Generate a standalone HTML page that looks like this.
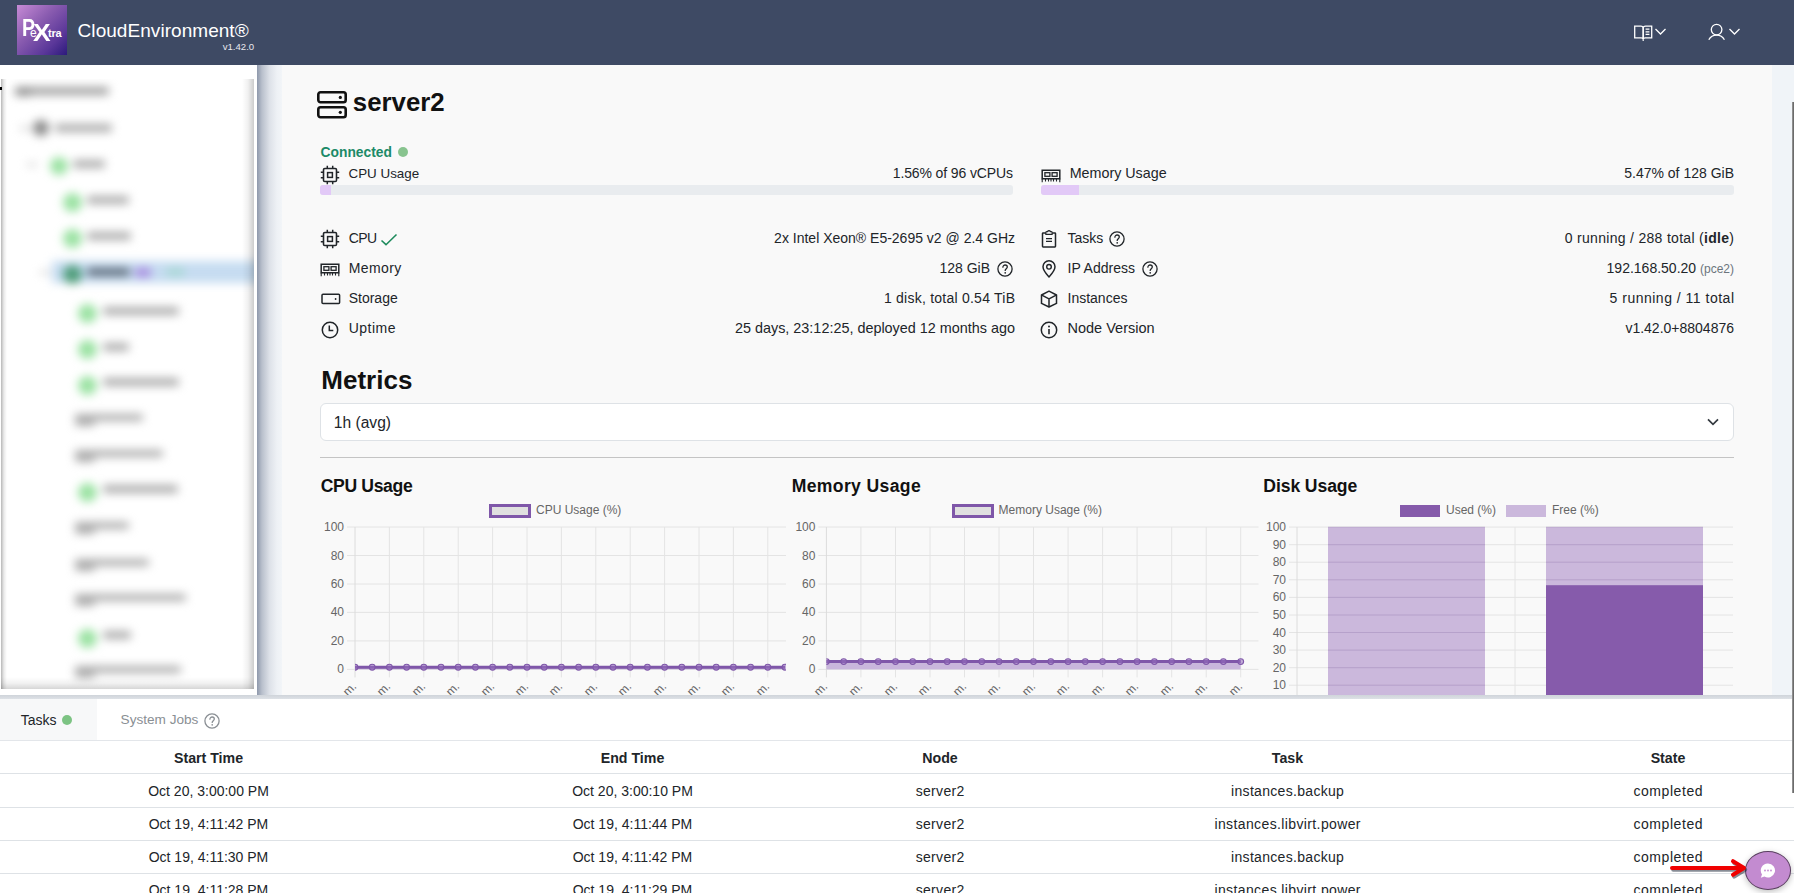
<!DOCTYPE html><html><head><meta charset="utf-8"><style>
html,body{margin:0;padding:0;width:1794px;height:893px;overflow:hidden;background:#f9f9f9;font-family:"Liberation Sans", sans-serif;}
.t{position:absolute;white-space:nowrap;}
.r{position:absolute;display:block;}
</style></head><body>
<div class="r" style="left:0.00px;top:65.00px;width:1794.00px;height:828.00px;background:#f9f9f9;"></div>
<div class="r" style="left:1772.00px;top:65.00px;width:22.00px;height:630.00px;background:#f0f4f8;"></div>
<div class="r" style="left:0.00px;top:0.00px;width:1794.00px;height:65.00px;background:#3e4a64;"></div>
<div class="r" style="left:17.00px;top:5.00px;width:50.00px;height:50.00px;background:linear-gradient(135deg,#c78bd6 0%,#8a5cb0 40%,#5a3799 75%,#2c1a7c 100%);"></div>
<div class="t" style="left:22px;top:17px;font-size:23px;line-height:23px;font-weight:700;color:#fff;transform:scaleX(0.85);transform-origin:0 0">P</div>
<div class="t" style="left:30px;top:26.5px;font-size:12px;line-height:12px;font-weight:400;color:#fff;">e</div>
<div class="t" style="left:32.5px;top:20.5px;font-size:24px;line-height:24px;font-weight:700;color:#fff;transform:scaleX(1.1);transform-origin:0 0;">X</div>
<div class="t" style="left:48px;top:28px;font-size:11px;line-height:11px;font-weight:700;color:#fff;letter-spacing:-0.2px">tra</div>
<div class="t" style="top:20.92px;font-size:19px;line-height:19px;font-weight:400;color:#ffffff;letter-spacing:0.05px;left:77.60px;">CloudEnvironment®</div>
<div class="t" style="top:41.77px;font-size:9.6px;line-height:9.6px;font-weight:400;color:#e8e8ee;right:1539.80px;">v1.42.0</div>
<svg class="r" style="left:1633.00px;top:24.00px;" width="21" height="18" viewBox="0 0 21 18"><path d="M1.7 2.2h6.1c1.3 0 2.4.9 2.4 2V15.2c0-.8-.9-1.4-2-1.4H1.7z" fill="none" stroke="#fff" stroke-width="1.3"/><path d="M18.7 2.2h-6.1c-1.3 0-2.4.9-2.4 2V15.2c0-.8.9-1.4 2-1.4h6.5z" fill="none" stroke="#fff" stroke-width="1.3"/><path d="M12.6 5.2h3.8M12.6 7.8h3.8M12.6 10.4h3.8" stroke="#fff" stroke-width="1.2"/><path d="M10.2 15.2v1.8" stroke="#fff" stroke-width="1.2"/></svg>
<svg class="r" style="left:1654.00px;top:27.00px;" width="13" height="10" viewBox="0 0 13 10"><path d="M1.5 2l5 5 5-5" fill="none" stroke="#fff" stroke-width="1.3"/></svg>
<svg class="r" style="left:1707.00px;top:22.00px;" width="21" height="20" viewBox="0 0 21 20"><circle cx="9.6" cy="7.6" r="5.3" fill="none" stroke="#fff" stroke-width="1.3"/><path d="M1.8 17.8c1.6-3 4.4-4.6 7.8-4.6s6.2 1.6 7.8 4.6" fill="none" stroke="#fff" stroke-width="1.3"/></svg>
<svg class="r" style="left:1728.00px;top:27.00px;" width="13" height="10" viewBox="0 0 13 10"><path d="M1.5 2l5 5 5-5" fill="none" stroke="#fff" stroke-width="1.3"/></svg>
<div class="r" style="left:0.00px;top:65.00px;width:257.00px;height:630.00px;background:#ffffff;"></div>
<div class="r" style="left:257.00px;top:65.00px;width:25.00px;height:630.00px;background:linear-gradient(90deg,#8e98ab 0%,#b9c0cc 20%,#dde1e8 50%,#eef1f5 80%,#f2f5f8 100%);"></div>
<div class="r" style="left:1px;top:79px;width:253px;height:610px;background:#fff;overflow:hidden;">
<div class="r" style="left:0;top:0;width:253px;height:610px;filter:blur(5px);">
<div class="r" style="left:51px;top:182px;width:220px;height:22px;background:#c6dcf1"></div>
<div class="r" style="left:16.0px;top:7.6px;width:92.0px;height:8px;background:#a0a0a0;border-radius:3px"></div>
<div class="r" style="left:14.0px;top:7.5px;width:16.0px;height:9px;background:#909090;border-radius:3px"></div>
<div class="r" style="left:19.0px;top:47.5px;width:10.0px;height:3px;background:#c4c4c4;border-radius:3px"></div>
<div class="r" style="left:32.0px;top:41.0px;width:16.0px;height:16.0px;background:#8a8a8a;border-radius:50%"></div>
<div class="r" style="left:54.0px;top:45.0px;width:57.0px;height:8px;background:#acacac;border-radius:3px"></div>
<div class="r" style="left:26.0px;top:83.5px;width:10.0px;height:3px;background:#c8c8c8;border-radius:3px"></div>
<div class="r" style="left:49.0px;top:78.0px;width:18.0px;height:18.0px;background:#9ae2a2;border-radius:50%"></div>
<div class="r" style="left:72.0px;top:81.0px;width:32.0px;height:8px;background:#acacac;border-radius:3px"></div>
<div class="r" style="left:62.0px;top:113.5px;width:19.0px;height:19.0px;background:#9ae2a2;border-radius:50%"></div>
<div class="r" style="left:86.0px;top:117.0px;width:42.0px;height:8px;background:#acacac;border-radius:3px"></div>
<div class="r" style="left:62.0px;top:149.5px;width:19.0px;height:19.0px;background:#9ae2a2;border-radius:50%"></div>
<div class="r" style="left:86.0px;top:153.0px;width:44.0px;height:8px;background:#acacac;border-radius:3px"></div>
<div class="r" style="left:39.0px;top:191.8px;width:10.0px;height:3px;background:#c8c8c8;border-radius:3px"></div>
<div class="r" style="left:62.0px;top:185.5px;width:19.0px;height:19.0px;background:#4f9d7a;border-radius:50%"></div>
<div class="r" style="left:86.0px;top:189.3px;width:43.0px;height:8px;background:#5e6a78;border-radius:3px"></div>
<div class="r" style="left:134.0px;top:188.8px;width:16.0px;height:9px;background:#a98ae0;border-radius:3px"></div>
<div class="r" style="left:165.0px;top:189.3px;width:19.0px;height:8px;background:#a8d8d4;border-radius:3px"></div>
<div class="r" style="left:77.0px;top:225.3px;width:19.0px;height:19.0px;background:#9ae2a2;border-radius:50%"></div>
<div class="r" style="left:102.0px;top:227.8px;width:75.6px;height:8px;background:#acacac;border-radius:3px"></div>
<div class="r" style="left:77.0px;top:261.0px;width:19.0px;height:19.0px;background:#9ae2a2;border-radius:50%"></div>
<div class="r" style="left:102.0px;top:263.5px;width:26.0px;height:8px;background:#acacac;border-radius:3px"></div>
<div class="r" style="left:77.0px;top:296.5px;width:19.0px;height:19.0px;background:#9ae2a2;border-radius:50%"></div>
<div class="r" style="left:102.0px;top:299.0px;width:75.6px;height:8px;background:#acacac;border-radius:3px"></div>
<div class="r" style="left:74.0px;top:341.0px;width:20.0px;height:6px;background:#acacac;border-radius:3px"></div>
<div class="r" style="left:74.0px;top:335.0px;width:68.0px;height:7px;background:#acacac;border-radius:3px"></div>
<div class="r" style="left:74.0px;top:376.6px;width:20.0px;height:6px;background:#acacac;border-radius:3px"></div>
<div class="r" style="left:74.0px;top:370.6px;width:87.6px;height:7px;background:#acacac;border-radius:3px"></div>
<div class="r" style="left:77.0px;top:403.5px;width:19.0px;height:19.0px;background:#9ae2a2;border-radius:50%"></div>
<div class="r" style="left:102.0px;top:406.0px;width:75.0px;height:8px;background:#acacac;border-radius:3px"></div>
<div class="r" style="left:74.0px;top:448.6px;width:20.0px;height:6px;background:#acacac;border-radius:3px"></div>
<div class="r" style="left:74.0px;top:442.6px;width:54.0px;height:7px;background:#acacac;border-radius:3px"></div>
<div class="r" style="left:74.0px;top:485.5px;width:20.0px;height:6px;background:#acacac;border-radius:3px"></div>
<div class="r" style="left:74.0px;top:479.5px;width:74.0px;height:7px;background:#acacac;border-radius:3px"></div>
<div class="r" style="left:74.0px;top:521.0px;width:20.0px;height:6px;background:#acacac;border-radius:3px"></div>
<div class="r" style="left:74.0px;top:515.0px;width:111.0px;height:7px;background:#acacac;border-radius:3px"></div>
<div class="r" style="left:77.0px;top:549.5px;width:19.0px;height:19.0px;background:#9ae2a2;border-radius:50%"></div>
<div class="r" style="left:102.0px;top:552.0px;width:27.5px;height:8px;background:#acacac;border-radius:3px"></div>
<div class="r" style="left:74.0px;top:592.7px;width:20.0px;height:6px;background:#acacac;border-radius:3px"></div>
<div class="r" style="left:74.0px;top:586.7px;width:106.0px;height:7px;background:#acacac;border-radius:3px"></div>
</div>
<div class="r" style="left:0;top:0;width:6px;height:610px;background:linear-gradient(90deg,rgba(0,0,0,.28),rgba(0,0,0,.08) 50%,rgba(0,0,0,0))"></div>
<div class="r" style="left:0;top:598px;width:253px;height:12px;background:linear-gradient(180deg,rgba(0,0,0,0),rgba(0,0,0,.05) 50%,rgba(0,0,0,.16))"></div>
<div class="r" style="left:241px;top:0;width:12px;height:610px;background:linear-gradient(90deg,rgba(0,0,0,0),rgba(0,0,0,.06) 50%,rgba(0,0,0,.2))"></div>
</div>
<div class="r" style="left:0.00px;top:87.00px;width:1.50px;height:3.00px;background:#000;"></div>
<svg class="r" style="left:317.00px;top:91.00px;" width="30" height="28" viewBox="0 0 30 28"><rect x="1.3" y="1.3" width="27.4" height="9.9" rx="2.2" fill="none" stroke="#111" stroke-width="2.6"/><rect x="1.3" y="16.3" width="27.4" height="9.9" rx="2.2" fill="none" stroke="#111" stroke-width="2.6"/><circle cx="23.3" cy="6.4" r="1.6" fill="#111"/><circle cx="23.3" cy="21.3" r="1.6" fill="#111"/></svg>
<div class="t" style="top:89.96px;font-size:25.8px;line-height:25.8px;font-weight:600;color:#111111;left:352.80px;">server2</div>
<div class="t" style="top:145.52px;font-size:13.8px;line-height:13.8px;font-weight:600;color:#1c8a68;left:320.60px;">Connected</div>
<div class="r" style="left:397.80px;top:146.60px;width:10.30px;height:10.30px;background:#88c48f;border-radius:50%;"></div>
<svg class="r" style="left:320.00px;top:165.00px;" width="20" height="20" viewBox="0 0 20 20"><rect x="3.5" y="3.5" width="13" height="13" rx="1.3" fill="none" stroke="#212529" stroke-width="1.6"/><rect x="7.6" y="7.6" width="4.8" height="4.8" fill="none" stroke="#212529" stroke-width="1.5"/><path d="M7.3 0.8v2.7M12.7 0.8v2.7M7.3 16.5v2.7M12.7 16.5v2.7M0.8 7.3h2.7M0.8 12.7h2.7M16.5 7.3h2.7M16.5 12.7h2.7" stroke="#212529" stroke-width="1.5"/></svg>
<div class="t" style="top:166.56px;font-size:13.4px;line-height:13.4px;font-weight:400;color:#212529;left:348.50px;">CPU Usage</div>
<div class="t" style="top:166.05px;font-size:14px;line-height:14px;font-weight:400;color:#212529;letter-spacing:-0.12px;right:781.12px;">1.56% of 96 vCPUs</div>
<div class="r" style="left:320.00px;top:185.00px;width:693.00px;height:10.00px;background:#e9ecef;border-radius:3px;"></div>
<div class="r" style="left:320.00px;top:185.00px;width:11.00px;height:10.00px;background:#e2c9f7;border-radius:3px 0 0 3px;"></div>
<svg class="r" style="left:1041.00px;top:168.80px;" width="20" height="14" viewBox="0 0 20 14"><path d="M1.2 1.2h17.6v8.6H1.2z" fill="none" stroke="#212529" stroke-width="1.5"/><rect x="3.9" y="3.7" width="5" height="3.6" fill="none" stroke="#212529" stroke-width="1.3"/><rect x="11.1" y="3.7" width="5" height="3.6" fill="none" stroke="#212529" stroke-width="1.3"/><path d="M1.2 9.8v3.4M18.8 9.8v3.4M4.5 10v2.6M7.5 10v2.6M10 10v2.6M12.5 10v2.6M15.5 10v2.6" stroke="#212529" stroke-width="1.1"/></svg>
<div class="t" style="top:165.80px;font-size:14.3px;line-height:14.3px;font-weight:400;color:#212529;left:1069.70px;">Memory Usage</div>
<div class="t" style="top:166.05px;font-size:14px;line-height:14px;font-weight:400;color:#212529;right:60.00px;">5.47% of 128 GiB</div>
<div class="r" style="left:1041.00px;top:185.00px;width:693.00px;height:10.00px;background:#e9ecef;border-radius:3px;"></div>
<div class="r" style="left:1041.00px;top:185.00px;width:38.00px;height:10.00px;background:#e2c9f7;border-radius:3px 0 0 3px;"></div>
<svg class="r" style="left:320.00px;top:229.00px;" width="20" height="20" viewBox="0 0 20 20"><rect x="3.5" y="3.5" width="13" height="13" rx="1.3" fill="none" stroke="#212529" stroke-width="1.6"/><rect x="7.6" y="7.6" width="4.8" height="4.8" fill="none" stroke="#212529" stroke-width="1.5"/><path d="M7.3 0.8v2.7M12.7 0.8v2.7M7.3 16.5v2.7M12.7 16.5v2.7M0.8 7.3h2.7M0.8 12.7h2.7M16.5 7.3h2.7M16.5 12.7h2.7" stroke="#212529" stroke-width="1.5"/></svg>
<div class="t" style="top:231.25px;font-size:14px;line-height:14px;font-weight:400;color:#212529;letter-spacing:-0.6px;left:348.70px;">CPU</div>
<svg class="r" style="left:380.00px;top:233.00px;" width="18" height="13" viewBox="0 0 18 13"><path d="M1.5 7.5l4.5 4.2L16.5 1.5" fill="none" stroke="#1d8a5c" stroke-width="1.6"/></svg>
<div class="t" style="top:231.25px;font-size:14px;line-height:14px;font-weight:400;color:#212529;right:779.00px;">2x Intel Xeon® E5-2695 v2 @ 2.4 GHz</div>
<svg class="r" style="left:320.00px;top:263.00px;" width="20" height="14" viewBox="0 0 20 14"><path d="M1.2 1.2h17.6v8.6H1.2z" fill="none" stroke="#212529" stroke-width="1.5"/><rect x="3.9" y="3.7" width="5" height="3.6" fill="none" stroke="#212529" stroke-width="1.3"/><rect x="11.1" y="3.7" width="5" height="3.6" fill="none" stroke="#212529" stroke-width="1.3"/><path d="M1.2 9.8v3.4M18.8 9.8v3.4M4.5 10v2.6M7.5 10v2.6M10 10v2.6M12.5 10v2.6M15.5 10v2.6" stroke="#212529" stroke-width="1.1"/></svg>
<div class="t" style="top:261.15px;font-size:14px;line-height:14px;font-weight:400;color:#212529;letter-spacing:0.4px;left:348.70px;">Memory</div>
<div class="t" style="top:261.15px;font-size:14px;line-height:14px;font-weight:400;color:#212529;right:804.00px;">128 GiB</div>
<svg class="r" style="left:997.00px;top:260.50px;" width="16" height="16" viewBox="0 0 16 16"><circle cx="8" cy="8" r="7.1" fill="none" stroke="#212529" stroke-width="1.3"/><path d="M5.9 6.2c0-1.3 1-2.2 2.2-2.2s2.2.9 2.2 2.1c0 1.5-2.1 1.7-2.1 3.3" fill="none" stroke="#212529" stroke-width="1.3" stroke-linecap="round"/><circle cx="8.2" cy="11.8" r="0.85" fill="#212529"/></svg>
<svg class="r" style="left:320.50px;top:293.00px;" width="20" height="12" viewBox="0 0 20 12"><rect x="1" y="1.2" width="17.6" height="9.4" rx="1" fill="none" stroke="#212529" stroke-width="1.5"/><circle cx="14.6" cy="6" r="0.9" fill="#212529"/></svg>
<div class="t" style="top:291.25px;font-size:14px;line-height:14px;font-weight:400;color:#212529;left:348.70px;">Storage</div>
<div class="t" style="top:291.25px;font-size:14px;line-height:14px;font-weight:400;color:#212529;letter-spacing:0.24px;right:778.76px;">1 disk, total 0.54 TiB</div>
<svg class="r" style="left:321.00px;top:321.00px;" width="18" height="18" viewBox="0 0 18 18"><circle cx="9" cy="9" r="7.7" fill="none" stroke="#212529" stroke-width="1.5"/><path d="M8.3 4.4v5.2h4" fill="none" stroke="#212529" stroke-width="1.5"/></svg>
<div class="t" style="top:321.15px;font-size:14px;line-height:14px;font-weight:400;color:#212529;letter-spacing:0.5px;left:348.70px;">Uptime</div>
<div class="t" style="top:320.81px;font-size:14.4px;line-height:14.4px;font-weight:400;color:#212529;right:779.00px;">25 days, 23:12:25, deployed 12 months ago</div>
<svg class="r" style="left:1041.00px;top:229.50px;" width="16" height="18" viewBox="0 0 16 18"><path d="M4.6 2.9H2.1c-.4 0-.6.3-.6.6v12.8c0 .4.3.6.6.6h11.8c.4 0 .6-.3.6-.6V3.5c0-.4-.3-.6-.6-.6h-2.5" fill="none" stroke="#212529" stroke-width="1.5"/><path d="M4.8 4.3V2.6c0-.5.4-.9.9-.9h.9c.2-.6.7-1 1.4-1s1.2.4 1.4 1h.9c.5 0 .9.4.9.9v1.7z" fill="none" stroke="#212529" stroke-width="1.3" stroke-linejoin="round"/><path d="M5 8.6h6M5 11.4h6" stroke="#212529" stroke-width="1.4"/></svg>
<div class="t" style="top:231.25px;font-size:14px;line-height:14px;font-weight:400;color:#212529;left:1067.50px;">Tasks</div>
<svg class="r" style="left:1109.00px;top:231.00px;" width="16" height="16" viewBox="0 0 16 16"><circle cx="8" cy="8" r="7.1" fill="none" stroke="#212529" stroke-width="1.3"/><path d="M5.9 6.2c0-1.3 1-2.2 2.2-2.2s2.2.9 2.2 2.1c0 1.5-2.1 1.7-2.1 3.3" fill="none" stroke="#212529" stroke-width="1.3" stroke-linecap="round"/><circle cx="8.2" cy="11.8" r="0.85" fill="#212529"/></svg>
<div class="t" style="top:231.25px;font-size:14px;line-height:14px;font-weight:400;color:#212529;letter-spacing:0.3px;right:59.70px;">0 running / 288 total (<b>idle</b>)</div>
<svg class="r" style="left:1041.00px;top:259.80px;" width="16" height="18" viewBox="0 0 16 18"><path d="M8 17C8 17 2 10.5 2 6.8A6 6 0 0 1 14 6.8C14 10.5 8 17 8 17z" fill="none" stroke="#212529" stroke-width="1.5" stroke-linejoin="round"/><circle cx="8" cy="6.8" r="2.3" fill="none" stroke="#212529" stroke-width="1.4"/></svg>
<div class="t" style="top:261.15px;font-size:14px;line-height:14px;font-weight:400;color:#212529;left:1067.50px;">IP Address</div>
<svg class="r" style="left:1142.00px;top:261.00px;" width="16" height="16" viewBox="0 0 16 16"><circle cx="8" cy="8" r="7.1" fill="none" stroke="#212529" stroke-width="1.3"/><path d="M5.9 6.2c0-1.3 1-2.2 2.2-2.2s2.2.9 2.2 2.1c0 1.5-2.1 1.7-2.1 3.3" fill="none" stroke="#212529" stroke-width="1.3" stroke-linecap="round"/><circle cx="8.2" cy="11.8" r="0.85" fill="#212529"/></svg>
<div class="t" style="top:261.15px;font-size:14px;line-height:14px;font-weight:400;color:#212529;right:60.00px;">192.168.50.20 <span style="font-size:12px;color:#6c757d">(pce2)</span></div>
<svg class="r" style="left:1040.00px;top:289.60px;" width="18" height="18" viewBox="0 0 18 18"><path d="M9 1.2L16.5 5v8.4L9 17 1.5 13.4V5z" fill="none" stroke="#212529" stroke-width="1.5" stroke-linejoin="round"/><path d="M1.8 5.2L9 8.8l7.2-3.6M9 8.8V16.8" fill="none" stroke="#212529" stroke-width="1.5" stroke-linejoin="round"/></svg>
<div class="t" style="top:291.25px;font-size:14px;line-height:14px;font-weight:400;color:#212529;left:1067.50px;">Instances</div>
<div class="t" style="top:291.25px;font-size:14px;line-height:14px;font-weight:400;color:#212529;letter-spacing:0.5px;right:59.50px;">5 running / 11 total</div>
<svg class="r" style="left:1040.00px;top:320.80px;" width="18" height="18" viewBox="0 0 18 18"><circle cx="9" cy="9" r="7.7" fill="none" stroke="#212529" stroke-width="1.5"/><path d="M9 8v5.2" stroke="#212529" stroke-width="1.6"/><circle cx="9" cy="5.4" r="1" fill="#212529"/></svg>
<div class="t" style="top:320.73px;font-size:14.5px;line-height:14.5px;font-weight:400;color:#212529;left:1067.50px;">Node Version</div>
<div class="t" style="top:321.15px;font-size:14px;line-height:14px;font-weight:400;color:#212529;right:60.00px;">v1.42.0+8804876</div>
<div class="t" style="top:366.99px;font-size:26px;line-height:26px;font-weight:600;color:#111111;left:321.30px;">Metrics</div>
<div class="r" style="left:320.00px;top:403.00px;width:1414.00px;height:37.50px;background:#ffffff;border:1px solid #dee2e6;border-radius:6px;box-sizing:border-box;"></div>
<div class="t" style="top:414.99px;font-size:15.6px;line-height:15.6px;font-weight:400;color:#212529;left:333.80px;">1h (avg)</div>
<svg class="r" style="left:1706.00px;top:416.00px;" width="14" height="11" viewBox="0 0 14 11"><path d="M2 3.3l5 5 5-5" fill="none" stroke="#343a40" stroke-width="1.7"/></svg>
<div class="r" style="left:320.00px;top:457.00px;width:1414.00px;height:1.20px;background:#c4c4c4;"></div>
<div class="t" style="top:478.10px;font-size:17.6px;line-height:17.6px;font-weight:600;color:#111111;letter-spacing:-0.35px;left:320.70px;">CPU Usage</div>
<div class="t" style="top:478.10px;font-size:17.6px;line-height:17.6px;font-weight:600;color:#111111;letter-spacing:0.35px;left:791.70px;">Memory Usage</div>
<div class="t" style="top:478.10px;font-size:17.6px;line-height:17.6px;font-weight:600;color:#111111;letter-spacing:-0.1px;left:1263.30px;">Disk Usage</div>
<svg class="r" style="left:320.00px;top:0.00px;overflow:hidden;" width="466" height="695" viewBox="0 0 466 695"><line x1="27" y1="527.0" x2="466" y2="527.0" stroke="#e4e4e4" stroke-width="1"/><line x1="27" y1="555.5" x2="466" y2="555.5" stroke="#e4e4e4" stroke-width="1"/><line x1="27" y1="584.0" x2="466" y2="584.0" stroke="#e4e4e4" stroke-width="1"/><line x1="27" y1="612.4" x2="466" y2="612.4" stroke="#e4e4e4" stroke-width="1"/><line x1="27" y1="640.9" x2="466" y2="640.9" stroke="#e4e4e4" stroke-width="1"/><line x1="27" y1="669.4" x2="466" y2="669.4" stroke="#e4e4e4" stroke-width="1"/><line x1="35.0" y1="527.0" x2="35.0" y2="677.4" stroke="#dcdcdc" stroke-width="1"/><line x1="69.4" y1="527.0" x2="69.4" y2="677.4" stroke="#e4e4e4" stroke-width="1"/><line x1="103.8" y1="527.0" x2="103.8" y2="677.4" stroke="#e4e4e4" stroke-width="1"/><line x1="138.2" y1="527.0" x2="138.2" y2="677.4" stroke="#e4e4e4" stroke-width="1"/><line x1="172.6" y1="527.0" x2="172.6" y2="677.4" stroke="#e4e4e4" stroke-width="1"/><line x1="207.0" y1="527.0" x2="207.0" y2="677.4" stroke="#e4e4e4" stroke-width="1"/><line x1="241.4" y1="527.0" x2="241.4" y2="677.4" stroke="#e4e4e4" stroke-width="1"/><line x1="275.8" y1="527.0" x2="275.8" y2="677.4" stroke="#e4e4e4" stroke-width="1"/><line x1="310.2" y1="527.0" x2="310.2" y2="677.4" stroke="#e4e4e4" stroke-width="1"/><line x1="344.6" y1="527.0" x2="344.6" y2="677.4" stroke="#e4e4e4" stroke-width="1"/><line x1="379.0" y1="527.0" x2="379.0" y2="677.4" stroke="#e4e4e4" stroke-width="1"/><line x1="413.4" y1="527.0" x2="413.4" y2="677.4" stroke="#e4e4e4" stroke-width="1"/><line x1="447.8" y1="527.0" x2="447.8" y2="677.4" stroke="#e4e4e4" stroke-width="1"/><rect x="35" y="667.2" width="430.0" height="2.2" fill="#c9b6dc"/><line x1="35" y1="667.2" x2="465.0" y2="667.2" stroke="#7f57a9" stroke-width="3"/><clipPath id="cp320"><rect x="35" y="0" width="1000" height="695"/></clipPath><g clip-path="url(#cp320)"><circle cx="35.0" cy="667.2" r="2.9" fill="rgba(150,110,190,0.55)" stroke="#7f57a9" stroke-width="1.1"/><circle cx="52.2" cy="667.2" r="2.9" fill="rgba(150,110,190,0.55)" stroke="#7f57a9" stroke-width="1.1"/><circle cx="69.4" cy="667.2" r="2.9" fill="rgba(150,110,190,0.55)" stroke="#7f57a9" stroke-width="1.1"/><circle cx="86.6" cy="667.2" r="2.9" fill="rgba(150,110,190,0.55)" stroke="#7f57a9" stroke-width="1.1"/><circle cx="103.8" cy="667.2" r="2.9" fill="rgba(150,110,190,0.55)" stroke="#7f57a9" stroke-width="1.1"/><circle cx="121.0" cy="667.2" r="2.9" fill="rgba(150,110,190,0.55)" stroke="#7f57a9" stroke-width="1.1"/><circle cx="138.2" cy="667.2" r="2.9" fill="rgba(150,110,190,0.55)" stroke="#7f57a9" stroke-width="1.1"/><circle cx="155.4" cy="667.2" r="2.9" fill="rgba(150,110,190,0.55)" stroke="#7f57a9" stroke-width="1.1"/><circle cx="172.6" cy="667.2" r="2.9" fill="rgba(150,110,190,0.55)" stroke="#7f57a9" stroke-width="1.1"/><circle cx="189.8" cy="667.2" r="2.9" fill="rgba(150,110,190,0.55)" stroke="#7f57a9" stroke-width="1.1"/><circle cx="207.0" cy="667.2" r="2.9" fill="rgba(150,110,190,0.55)" stroke="#7f57a9" stroke-width="1.1"/><circle cx="224.2" cy="667.2" r="2.9" fill="rgba(150,110,190,0.55)" stroke="#7f57a9" stroke-width="1.1"/><circle cx="241.4" cy="667.2" r="2.9" fill="rgba(150,110,190,0.55)" stroke="#7f57a9" stroke-width="1.1"/><circle cx="258.6" cy="667.2" r="2.9" fill="rgba(150,110,190,0.55)" stroke="#7f57a9" stroke-width="1.1"/><circle cx="275.8" cy="667.2" r="2.9" fill="rgba(150,110,190,0.55)" stroke="#7f57a9" stroke-width="1.1"/><circle cx="293.0" cy="667.2" r="2.9" fill="rgba(150,110,190,0.55)" stroke="#7f57a9" stroke-width="1.1"/><circle cx="310.2" cy="667.2" r="2.9" fill="rgba(150,110,190,0.55)" stroke="#7f57a9" stroke-width="1.1"/><circle cx="327.4" cy="667.2" r="2.9" fill="rgba(150,110,190,0.55)" stroke="#7f57a9" stroke-width="1.1"/><circle cx="344.6" cy="667.2" r="2.9" fill="rgba(150,110,190,0.55)" stroke="#7f57a9" stroke-width="1.1"/><circle cx="361.8" cy="667.2" r="2.9" fill="rgba(150,110,190,0.55)" stroke="#7f57a9" stroke-width="1.1"/><circle cx="379.0" cy="667.2" r="2.9" fill="rgba(150,110,190,0.55)" stroke="#7f57a9" stroke-width="1.1"/><circle cx="396.2" cy="667.2" r="2.9" fill="rgba(150,110,190,0.55)" stroke="#7f57a9" stroke-width="1.1"/><circle cx="413.4" cy="667.2" r="2.9" fill="rgba(150,110,190,0.55)" stroke="#7f57a9" stroke-width="1.1"/><circle cx="430.6" cy="667.2" r="2.9" fill="rgba(150,110,190,0.55)" stroke="#7f57a9" stroke-width="1.1"/><circle cx="447.8" cy="667.2" r="2.9" fill="rgba(150,110,190,0.55)" stroke="#7f57a9" stroke-width="1.1"/><circle cx="465.0" cy="667.2" r="2.9" fill="rgba(150,110,190,0.55)" stroke="#7f57a9" stroke-width="1.1"/></g></svg>
<div class="t" style="top:521.04px;font-size:12px;line-height:12px;font-weight:400;color:#666666;right:1450.00px;">100</div>
<div class="t" style="top:549.52px;font-size:12px;line-height:12px;font-weight:400;color:#666666;right:1450.00px;">80</div>
<div class="t" style="top:578.00px;font-size:12px;line-height:12px;font-weight:400;color:#666666;right:1450.00px;">60</div>
<div class="t" style="top:606.48px;font-size:12px;line-height:12px;font-weight:400;color:#666666;right:1450.00px;">40</div>
<div class="t" style="top:634.96px;font-size:12px;line-height:12px;font-weight:400;color:#666666;right:1450.00px;">20</div>
<div class="t" style="top:663.44px;font-size:12px;line-height:12px;font-weight:400;color:#666666;right:1450.00px;">0</div>
<div class="t" style="left:290.0px;top:680.0px;width:60px;text-align:right;font-size:12px;line-height:12px;color:#666666;transform-origin:100% 0;transform:rotate(-45deg);">a.m.</div>
<div class="t" style="left:324.4px;top:680.0px;width:60px;text-align:right;font-size:12px;line-height:12px;color:#666666;transform-origin:100% 0;transform:rotate(-45deg);">a.m.</div>
<div class="t" style="left:358.8px;top:680.0px;width:60px;text-align:right;font-size:12px;line-height:12px;color:#666666;transform-origin:100% 0;transform:rotate(-45deg);">a.m.</div>
<div class="t" style="left:393.2px;top:680.0px;width:60px;text-align:right;font-size:12px;line-height:12px;color:#666666;transform-origin:100% 0;transform:rotate(-45deg);">a.m.</div>
<div class="t" style="left:427.6px;top:680.0px;width:60px;text-align:right;font-size:12px;line-height:12px;color:#666666;transform-origin:100% 0;transform:rotate(-45deg);">a.m.</div>
<div class="t" style="left:462.0px;top:680.0px;width:60px;text-align:right;font-size:12px;line-height:12px;color:#666666;transform-origin:100% 0;transform:rotate(-45deg);">a.m.</div>
<div class="t" style="left:496.4px;top:680.0px;width:60px;text-align:right;font-size:12px;line-height:12px;color:#666666;transform-origin:100% 0;transform:rotate(-45deg);">a.m.</div>
<div class="t" style="left:530.8px;top:680.0px;width:60px;text-align:right;font-size:12px;line-height:12px;color:#666666;transform-origin:100% 0;transform:rotate(-45deg);">a.m.</div>
<div class="t" style="left:565.2px;top:680.0px;width:60px;text-align:right;font-size:12px;line-height:12px;color:#666666;transform-origin:100% 0;transform:rotate(-45deg);">a.m.</div>
<div class="t" style="left:599.6px;top:680.0px;width:60px;text-align:right;font-size:12px;line-height:12px;color:#666666;transform-origin:100% 0;transform:rotate(-45deg);">a.m.</div>
<div class="t" style="left:634.0px;top:680.0px;width:60px;text-align:right;font-size:12px;line-height:12px;color:#666666;transform-origin:100% 0;transform:rotate(-45deg);">a.m.</div>
<div class="t" style="left:668.4px;top:680.0px;width:60px;text-align:right;font-size:12px;line-height:12px;color:#666666;transform-origin:100% 0;transform:rotate(-45deg);">a.m.</div>
<div class="t" style="left:702.8px;top:680.0px;width:60px;text-align:right;font-size:12px;line-height:12px;color:#666666;transform-origin:100% 0;transform:rotate(-45deg);">a.m.</div>
<div class="r" style="left:490.50px;top:505.50px;width:39.00px;height:11.00px;background:#e0e0e0;border:3px solid #7f57a9;box-sizing:border-box;width:42px;height:14px;left:489px;top:504px;"></div>
<div class="t" style="top:504.04px;font-size:12px;line-height:12px;font-weight:400;color:#666666;left:536.00px;">CPU Usage (%)</div>
<svg class="r" style="left:791.00px;top:0.00px;overflow:hidden;" width="470" height="695" viewBox="0 0 470 695"><line x1="27.399999999999977" y1="527.0" x2="467.5" y2="527.0" stroke="#e4e4e4" stroke-width="1"/><line x1="27.399999999999977" y1="555.5" x2="467.5" y2="555.5" stroke="#e4e4e4" stroke-width="1"/><line x1="27.399999999999977" y1="584.0" x2="467.5" y2="584.0" stroke="#e4e4e4" stroke-width="1"/><line x1="27.399999999999977" y1="612.4" x2="467.5" y2="612.4" stroke="#e4e4e4" stroke-width="1"/><line x1="27.399999999999977" y1="640.9" x2="467.5" y2="640.9" stroke="#e4e4e4" stroke-width="1"/><line x1="27.399999999999977" y1="669.4" x2="467.5" y2="669.4" stroke="#e4e4e4" stroke-width="1"/><line x1="35.4" y1="527.0" x2="35.4" y2="677.4" stroke="#dcdcdc" stroke-width="1"/><line x1="69.9" y1="527.0" x2="69.9" y2="677.4" stroke="#e4e4e4" stroke-width="1"/><line x1="104.5" y1="527.0" x2="104.5" y2="677.4" stroke="#e4e4e4" stroke-width="1"/><line x1="139.0" y1="527.0" x2="139.0" y2="677.4" stroke="#e4e4e4" stroke-width="1"/><line x1="173.5" y1="527.0" x2="173.5" y2="677.4" stroke="#e4e4e4" stroke-width="1"/><line x1="208.0" y1="527.0" x2="208.0" y2="677.4" stroke="#e4e4e4" stroke-width="1"/><line x1="242.5" y1="527.0" x2="242.5" y2="677.4" stroke="#e4e4e4" stroke-width="1"/><line x1="277.1" y1="527.0" x2="277.1" y2="677.4" stroke="#e4e4e4" stroke-width="1"/><line x1="311.6" y1="527.0" x2="311.6" y2="677.4" stroke="#e4e4e4" stroke-width="1"/><line x1="346.1" y1="527.0" x2="346.1" y2="677.4" stroke="#e4e4e4" stroke-width="1"/><line x1="380.7" y1="527.0" x2="380.7" y2="677.4" stroke="#e4e4e4" stroke-width="1"/><line x1="415.2" y1="527.0" x2="415.2" y2="677.4" stroke="#e4e4e4" stroke-width="1"/><line x1="449.7" y1="527.0" x2="449.7" y2="677.4" stroke="#e4e4e4" stroke-width="1"/><rect x="35.39999999999998" y="661.6" width="414.3" height="7.8" fill="#c9b6dc"/><line x1="35.39999999999998" y1="661.6" x2="449.7" y2="661.6" stroke="#7f57a9" stroke-width="3"/><clipPath id="cp791"><rect x="35.39999999999998" y="0" width="1000" height="695"/></clipPath><g clip-path="url(#cp791)"><circle cx="35.4" cy="661.6" r="2.9" fill="rgba(150,110,190,0.55)" stroke="#7f57a9" stroke-width="1.1"/><circle cx="52.7" cy="661.6" r="2.9" fill="rgba(150,110,190,0.55)" stroke="#7f57a9" stroke-width="1.1"/><circle cx="69.9" cy="661.6" r="2.9" fill="rgba(150,110,190,0.55)" stroke="#7f57a9" stroke-width="1.1"/><circle cx="87.2" cy="661.6" r="2.9" fill="rgba(150,110,190,0.55)" stroke="#7f57a9" stroke-width="1.1"/><circle cx="104.5" cy="661.6" r="2.9" fill="rgba(150,110,190,0.55)" stroke="#7f57a9" stroke-width="1.1"/><circle cx="121.7" cy="661.6" r="2.9" fill="rgba(150,110,190,0.55)" stroke="#7f57a9" stroke-width="1.1"/><circle cx="139.0" cy="661.6" r="2.9" fill="rgba(150,110,190,0.55)" stroke="#7f57a9" stroke-width="1.1"/><circle cx="156.2" cy="661.6" r="2.9" fill="rgba(150,110,190,0.55)" stroke="#7f57a9" stroke-width="1.1"/><circle cx="173.5" cy="661.6" r="2.9" fill="rgba(150,110,190,0.55)" stroke="#7f57a9" stroke-width="1.1"/><circle cx="190.8" cy="661.6" r="2.9" fill="rgba(150,110,190,0.55)" stroke="#7f57a9" stroke-width="1.1"/><circle cx="208.0" cy="661.6" r="2.9" fill="rgba(150,110,190,0.55)" stroke="#7f57a9" stroke-width="1.1"/><circle cx="225.3" cy="661.6" r="2.9" fill="rgba(150,110,190,0.55)" stroke="#7f57a9" stroke-width="1.1"/><circle cx="242.5" cy="661.6" r="2.9" fill="rgba(150,110,190,0.55)" stroke="#7f57a9" stroke-width="1.1"/><circle cx="259.8" cy="661.6" r="2.9" fill="rgba(150,110,190,0.55)" stroke="#7f57a9" stroke-width="1.1"/><circle cx="277.1" cy="661.6" r="2.9" fill="rgba(150,110,190,0.55)" stroke="#7f57a9" stroke-width="1.1"/><circle cx="294.3" cy="661.6" r="2.9" fill="rgba(150,110,190,0.55)" stroke="#7f57a9" stroke-width="1.1"/><circle cx="311.6" cy="661.6" r="2.9" fill="rgba(150,110,190,0.55)" stroke="#7f57a9" stroke-width="1.1"/><circle cx="328.9" cy="661.6" r="2.9" fill="rgba(150,110,190,0.55)" stroke="#7f57a9" stroke-width="1.1"/><circle cx="346.1" cy="661.6" r="2.9" fill="rgba(150,110,190,0.55)" stroke="#7f57a9" stroke-width="1.1"/><circle cx="363.4" cy="661.6" r="2.9" fill="rgba(150,110,190,0.55)" stroke="#7f57a9" stroke-width="1.1"/><circle cx="380.7" cy="661.6" r="2.9" fill="rgba(150,110,190,0.55)" stroke="#7f57a9" stroke-width="1.1"/><circle cx="397.9" cy="661.6" r="2.9" fill="rgba(150,110,190,0.55)" stroke="#7f57a9" stroke-width="1.1"/><circle cx="415.2" cy="661.6" r="2.9" fill="rgba(150,110,190,0.55)" stroke="#7f57a9" stroke-width="1.1"/><circle cx="432.4" cy="661.6" r="2.9" fill="rgba(150,110,190,0.55)" stroke="#7f57a9" stroke-width="1.1"/><circle cx="449.7" cy="661.6" r="2.9" fill="rgba(150,110,190,0.55)" stroke="#7f57a9" stroke-width="1.1"/></g></svg>
<div class="t" style="top:521.04px;font-size:12px;line-height:12px;font-weight:400;color:#666666;right:978.60px;">100</div>
<div class="t" style="top:549.52px;font-size:12px;line-height:12px;font-weight:400;color:#666666;right:978.60px;">80</div>
<div class="t" style="top:578.00px;font-size:12px;line-height:12px;font-weight:400;color:#666666;right:978.60px;">60</div>
<div class="t" style="top:606.48px;font-size:12px;line-height:12px;font-weight:400;color:#666666;right:978.60px;">40</div>
<div class="t" style="top:634.96px;font-size:12px;line-height:12px;font-weight:400;color:#666666;right:978.60px;">20</div>
<div class="t" style="top:663.44px;font-size:12px;line-height:12px;font-weight:400;color:#666666;right:978.60px;">0</div>
<div class="t" style="left:761.4px;top:680.0px;width:60px;text-align:right;font-size:12px;line-height:12px;color:#666666;transform-origin:100% 0;transform:rotate(-45deg);">a.m.</div>
<div class="t" style="left:795.9px;top:680.0px;width:60px;text-align:right;font-size:12px;line-height:12px;color:#666666;transform-origin:100% 0;transform:rotate(-45deg);">a.m.</div>
<div class="t" style="left:830.5px;top:680.0px;width:60px;text-align:right;font-size:12px;line-height:12px;color:#666666;transform-origin:100% 0;transform:rotate(-45deg);">a.m.</div>
<div class="t" style="left:865.0px;top:680.0px;width:60px;text-align:right;font-size:12px;line-height:12px;color:#666666;transform-origin:100% 0;transform:rotate(-45deg);">a.m.</div>
<div class="t" style="left:899.5px;top:680.0px;width:60px;text-align:right;font-size:12px;line-height:12px;color:#666666;transform-origin:100% 0;transform:rotate(-45deg);">a.m.</div>
<div class="t" style="left:934.0px;top:680.0px;width:60px;text-align:right;font-size:12px;line-height:12px;color:#666666;transform-origin:100% 0;transform:rotate(-45deg);">a.m.</div>
<div class="t" style="left:968.5px;top:680.0px;width:60px;text-align:right;font-size:12px;line-height:12px;color:#666666;transform-origin:100% 0;transform:rotate(-45deg);">a.m.</div>
<div class="t" style="left:1003.1px;top:680.0px;width:60px;text-align:right;font-size:12px;line-height:12px;color:#666666;transform-origin:100% 0;transform:rotate(-45deg);">a.m.</div>
<div class="t" style="left:1037.6px;top:680.0px;width:60px;text-align:right;font-size:12px;line-height:12px;color:#666666;transform-origin:100% 0;transform:rotate(-45deg);">a.m.</div>
<div class="t" style="left:1072.1px;top:680.0px;width:60px;text-align:right;font-size:12px;line-height:12px;color:#666666;transform-origin:100% 0;transform:rotate(-45deg);">a.m.</div>
<div class="t" style="left:1106.7px;top:680.0px;width:60px;text-align:right;font-size:12px;line-height:12px;color:#666666;transform-origin:100% 0;transform:rotate(-45deg);">a.m.</div>
<div class="t" style="left:1141.2px;top:680.0px;width:60px;text-align:right;font-size:12px;line-height:12px;color:#666666;transform-origin:100% 0;transform:rotate(-45deg);">a.m.</div>
<div class="t" style="left:1175.7px;top:680.0px;width:60px;text-align:right;font-size:12px;line-height:12px;color:#666666;transform-origin:100% 0;transform:rotate(-45deg);">a.m.</div>
<div class="r" style="left:953.10px;top:505.50px;width:39.00px;height:11.00px;background:#e0e0e0;border:3px solid #7f57a9;box-sizing:border-box;width:42px;height:14px;left:951.6px;top:504px;"></div>
<div class="t" style="top:504.04px;font-size:12px;line-height:12px;font-weight:400;color:#666666;left:998.60px;">Memory Usage (%)</div>
<svg class="r" style="left:1262.00px;top:0.00px;overflow:hidden;" width="480" height="695" viewBox="0 0 480 695"><line x1="27" y1="527.1" x2="471" y2="527.1" stroke="#e4e4e4" stroke-width="1"/><line x1="27" y1="544.7" x2="471" y2="544.7" stroke="#e4e4e4" stroke-width="1"/><line x1="27" y1="562.2" x2="471" y2="562.2" stroke="#e4e4e4" stroke-width="1"/><line x1="27" y1="579.8" x2="471" y2="579.8" stroke="#e4e4e4" stroke-width="1"/><line x1="27" y1="597.4" x2="471" y2="597.4" stroke="#e4e4e4" stroke-width="1"/><line x1="27" y1="615.0" x2="471" y2="615.0" stroke="#e4e4e4" stroke-width="1"/><line x1="27" y1="632.5" x2="471" y2="632.5" stroke="#e4e4e4" stroke-width="1"/><line x1="27" y1="650.1" x2="471" y2="650.1" stroke="#e4e4e4" stroke-width="1"/><line x1="27" y1="667.7" x2="471" y2="667.7" stroke="#e4e4e4" stroke-width="1"/><line x1="27" y1="685.2" x2="471" y2="685.2" stroke="#e4e4e4" stroke-width="1"/><line x1="27" y1="702.8" x2="471" y2="702.8" stroke="#e4e4e4" stroke-width="1"/><line x1="35" y1="527.1" x2="35" y2="720" stroke="#dcdcdc" stroke-width="1"/><line x1="253" y1="527.1" x2="253" y2="720" stroke="#e4e4e4" stroke-width="1"/><rect x="66" y="527.1" width="157" height="200" fill="#cbb8dc"/><rect x="284" y="527.1" width="157" height="200" fill="#cbb8dc"/><rect x="284" y="585.2" width="157" height="200" fill="#865bab"/><line x1="66" y1="527.1" x2="223" y2="527.1" stroke="rgba(120,90,150,0.25)" stroke-width="1"/><line x1="284" y1="527.1" x2="441" y2="527.1" stroke="rgba(120,90,150,0.25)" stroke-width="1"/><line x1="66" y1="544.7" x2="223" y2="544.7" stroke="rgba(120,90,150,0.25)" stroke-width="1"/><line x1="284" y1="544.7" x2="441" y2="544.7" stroke="rgba(120,90,150,0.25)" stroke-width="1"/><line x1="66" y1="562.2" x2="223" y2="562.2" stroke="rgba(120,90,150,0.25)" stroke-width="1"/><line x1="284" y1="562.2" x2="441" y2="562.2" stroke="rgba(120,90,150,0.25)" stroke-width="1"/><line x1="66" y1="579.8" x2="223" y2="579.8" stroke="rgba(120,90,150,0.25)" stroke-width="1"/><line x1="284" y1="579.8" x2="441" y2="579.8" stroke="rgba(120,90,150,0.25)" stroke-width="1"/><line x1="66" y1="597.4" x2="223" y2="597.4" stroke="rgba(120,90,150,0.25)" stroke-width="1"/><line x1="66" y1="615.0" x2="223" y2="615.0" stroke="rgba(120,90,150,0.25)" stroke-width="1"/><line x1="66" y1="632.5" x2="223" y2="632.5" stroke="rgba(120,90,150,0.25)" stroke-width="1"/><line x1="66" y1="650.1" x2="223" y2="650.1" stroke="rgba(120,90,150,0.25)" stroke-width="1"/><line x1="66" y1="667.7" x2="223" y2="667.7" stroke="rgba(120,90,150,0.25)" stroke-width="1"/><line x1="66" y1="685.2" x2="223" y2="685.2" stroke="rgba(120,90,150,0.25)" stroke-width="1"/><line x1="66" y1="702.8" x2="223" y2="702.8" stroke="rgba(120,90,150,0.25)" stroke-width="1"/></svg>
<div class="t" style="top:521.14px;font-size:12px;line-height:12px;font-weight:400;color:#666666;right:508.00px;">100</div>
<div class="t" style="top:538.71px;font-size:12px;line-height:12px;font-weight:400;color:#666666;right:508.00px;">90</div>
<div class="t" style="top:556.28px;font-size:12px;line-height:12px;font-weight:400;color:#666666;right:508.00px;">80</div>
<div class="t" style="top:573.85px;font-size:12px;line-height:12px;font-weight:400;color:#666666;right:508.00px;">70</div>
<div class="t" style="top:591.42px;font-size:12px;line-height:12px;font-weight:400;color:#666666;right:508.00px;">60</div>
<div class="t" style="top:608.99px;font-size:12px;line-height:12px;font-weight:400;color:#666666;right:508.00px;">50</div>
<div class="t" style="top:626.56px;font-size:12px;line-height:12px;font-weight:400;color:#666666;right:508.00px;">40</div>
<div class="t" style="top:644.13px;font-size:12px;line-height:12px;font-weight:400;color:#666666;right:508.00px;">30</div>
<div class="t" style="top:661.70px;font-size:12px;line-height:12px;font-weight:400;color:#666666;right:508.00px;">20</div>
<div class="t" style="top:679.27px;font-size:12px;line-height:12px;font-weight:400;color:#666666;right:508.00px;">10</div>
<div class="r" style="left:1399.50px;top:505.00px;width:40.00px;height:12.00px;background:#865bab;"></div>
<div class="t" style="top:504.04px;font-size:12px;line-height:12px;font-weight:400;color:#666666;left:1446.00px;">Used (%)</div>
<div class="r" style="left:1505.50px;top:505.00px;width:40.00px;height:12.00px;background:#cbb8dc;"></div>
<div class="t" style="top:504.04px;font-size:12px;line-height:12px;font-weight:400;color:#666666;left:1552.00px;">Free (%)</div>
<div class="r" style="left:0.00px;top:695.00px;width:1794.00px;height:198.00px;background:#ffffff;"></div>
<div class="r" style="left:0.00px;top:695.00px;width:1794.00px;height:4.00px;background:linear-gradient(180deg,#cfd4da,#dde1e6);"></div>
<div class="r" style="left:0.00px;top:699.00px;width:97.00px;height:41.50px;background:#f7f8f9;"></div>
<div class="t" style="top:712.75px;font-size:14px;line-height:14px;font-weight:400;color:#212529;left:20.80px;">Tasks</div>
<div class="r" style="left:62.00px;top:715.00px;width:10.00px;height:10.00px;background:#7cc383;border-radius:50%;"></div>
<div class="t" style="top:713.09px;font-size:13.6px;line-height:13.6px;font-weight:400;color:#8a8f94;left:120.60px;">System Jobs</div>
<svg class="r" style="left:204.00px;top:713.00px;" width="16" height="16" viewBox="0 0 16 16"><circle cx="8" cy="8" r="7.1" fill="none" stroke="#8a8f94" stroke-width="1.3"/><path d="M5.9 6.2c0-1.3 1-2.2 2.2-2.2s2.2.9 2.2 2.1c0 1.5-2.1 1.7-2.1 3.3" fill="none" stroke="#8a8f94" stroke-width="1.3" stroke-linecap="round"/><circle cx="8.2" cy="11.8" r="0.85" fill="#8a8f94"/></svg>
<div class="r" style="left:0.00px;top:740.00px;width:1794.00px;height:1.00px;background:#e3e6ea;"></div>
<div class="t" style="top:750.78px;font-size:14.2px;line-height:14.2px;font-weight:700;color:#212529;left:-291.50px;width:1000px;text-align:center;">Start Time</div>
<div class="t" style="top:750.78px;font-size:14.2px;line-height:14.2px;font-weight:700;color:#212529;left:132.50px;width:1000px;text-align:center;">End Time</div>
<div class="t" style="top:750.78px;font-size:14.2px;line-height:14.2px;font-weight:700;color:#212529;left:440.00px;width:1000px;text-align:center;">Node</div>
<div class="t" style="top:750.78px;font-size:14.2px;line-height:14.2px;font-weight:700;color:#212529;left:787.50px;width:1000px;text-align:center;">Task</div>
<div class="t" style="top:750.78px;font-size:14.2px;line-height:14.2px;font-weight:700;color:#212529;left:1168.00px;width:1000px;text-align:center;">State</div>
<div class="r" style="left:0.00px;top:773.00px;width:1794.00px;height:1.00px;background:#dee2e6;"></div>
<div class="t" style="top:783.85px;font-size:14px;line-height:14px;font-weight:400;color:#212529;left:-291.50px;width:1000px;text-align:center;">Oct 20, 3:00:00 PM</div>
<div class="t" style="top:783.85px;font-size:14px;line-height:14px;font-weight:400;color:#212529;left:132.50px;width:1000px;text-align:center;">Oct 20, 3:00:10 PM</div>
<div class="t" style="top:783.85px;font-size:14px;line-height:14px;font-weight:400;color:#212529;letter-spacing:0.3px;left:440.15px;width:1000px;text-align:center;">server2</div>
<div class="t" style="top:783.85px;font-size:14px;line-height:14px;font-weight:400;color:#212529;letter-spacing:0.31px;left:787.65px;width:1000px;text-align:center;">instances.backup</div>
<div class="t" style="top:783.85px;font-size:14px;line-height:14px;font-weight:400;color:#212529;letter-spacing:0.57px;left:1168.29px;width:1000px;text-align:center;">completed</div>
<div class="r" style="left:0.00px;top:806.60px;width:1794.00px;height:1.00px;background:#dee2e6;"></div>
<div class="t" style="top:816.95px;font-size:14px;line-height:14px;font-weight:400;color:#212529;left:-291.50px;width:1000px;text-align:center;">Oct 19, 4:11:42 PM</div>
<div class="t" style="top:816.95px;font-size:14px;line-height:14px;font-weight:400;color:#212529;left:132.50px;width:1000px;text-align:center;">Oct 19, 4:11:44 PM</div>
<div class="t" style="top:816.95px;font-size:14px;line-height:14px;font-weight:400;color:#212529;letter-spacing:0.3px;left:440.15px;width:1000px;text-align:center;">server2</div>
<div class="t" style="top:816.95px;font-size:14px;line-height:14px;font-weight:400;color:#212529;letter-spacing:0.38px;left:787.69px;width:1000px;text-align:center;">instances.libvirt.power</div>
<div class="t" style="top:816.95px;font-size:14px;line-height:14px;font-weight:400;color:#212529;letter-spacing:0.57px;left:1168.29px;width:1000px;text-align:center;">completed</div>
<div class="r" style="left:0.00px;top:839.70px;width:1794.00px;height:1.00px;background:#dee2e6;"></div>
<div class="t" style="top:850.05px;font-size:14px;line-height:14px;font-weight:400;color:#212529;left:-291.50px;width:1000px;text-align:center;">Oct 19, 4:11:30 PM</div>
<div class="t" style="top:850.05px;font-size:14px;line-height:14px;font-weight:400;color:#212529;left:132.50px;width:1000px;text-align:center;">Oct 19, 4:11:42 PM</div>
<div class="t" style="top:850.05px;font-size:14px;line-height:14px;font-weight:400;color:#212529;letter-spacing:0.3px;left:440.15px;width:1000px;text-align:center;">server2</div>
<div class="t" style="top:850.05px;font-size:14px;line-height:14px;font-weight:400;color:#212529;letter-spacing:0.31px;left:787.65px;width:1000px;text-align:center;">instances.backup</div>
<div class="t" style="top:850.05px;font-size:14px;line-height:14px;font-weight:400;color:#212529;letter-spacing:0.57px;left:1168.29px;width:1000px;text-align:center;">completed</div>
<div class="r" style="left:0.00px;top:872.80px;width:1794.00px;height:1.00px;background:#dee2e6;"></div>
<div class="t" style="top:883.15px;font-size:14px;line-height:14px;font-weight:400;color:#212529;left:-291.50px;width:1000px;text-align:center;">Oct 19, 4:11:28 PM</div>
<div class="t" style="top:883.15px;font-size:14px;line-height:14px;font-weight:400;color:#212529;left:132.50px;width:1000px;text-align:center;">Oct 19, 4:11:29 PM</div>
<div class="t" style="top:883.15px;font-size:14px;line-height:14px;font-weight:400;color:#212529;letter-spacing:0.3px;left:440.15px;width:1000px;text-align:center;">server2</div>
<div class="t" style="top:883.15px;font-size:14px;line-height:14px;font-weight:400;color:#212529;letter-spacing:0.38px;left:787.69px;width:1000px;text-align:center;">instances.libvirt.power</div>
<div class="t" style="top:883.15px;font-size:14px;line-height:14px;font-weight:400;color:#212529;letter-spacing:0.57px;left:1168.29px;width:1000px;text-align:center;">completed</div>
<div class="r" style="left:1745px;top:851px;width:46px;height:38.5px;border-radius:50%;background:#c38bd0;border:1px solid #5a4060;box-sizing:border-box;box-shadow:0 2px 6px rgba(0,0,0,.25);"></div>
<svg class="r" style="left:1759.00px;top:862.00px;" width="18" height="18" viewBox="0 0 18 18"><path d="M9 1.5a7 7 0 1 1-3.6 13l-3.6 1.2 1.2-3.3A7 7 0 0 1 9 1.5z" fill="#fff"/><circle cx="6" cy="8.5" r="0.9" fill="#c38bd0"/><circle cx="9" cy="8.5" r="0.9" fill="#c38bd0"/><circle cx="12" cy="8.5" r="0.9" fill="#c38bd0"/></svg>
<svg class="r" style="left:1664.00px;top:855.00px;" width="84" height="28" viewBox="0 0 84 28"><g transform="translate(1.2,1.8)" opacity="0.55"><path d="M8 13h72M69 6.2l11 6.8-11 6.8" fill="none" stroke="#243040" stroke-width="4" stroke-linecap="round" stroke-linejoin="round"/></g><path d="M8 13h72M69 6.2l11 6.8-11 6.8" fill="none" stroke="#f00000" stroke-width="4" stroke-linecap="round" stroke-linejoin="round"/></svg>
<div class="r" style="left:1792.00px;top:102.00px;width:2.00px;height:691.00px;background:linear-gradient(90deg,#a0a0a0,#5a5a5a);"></div>
</body></html>
